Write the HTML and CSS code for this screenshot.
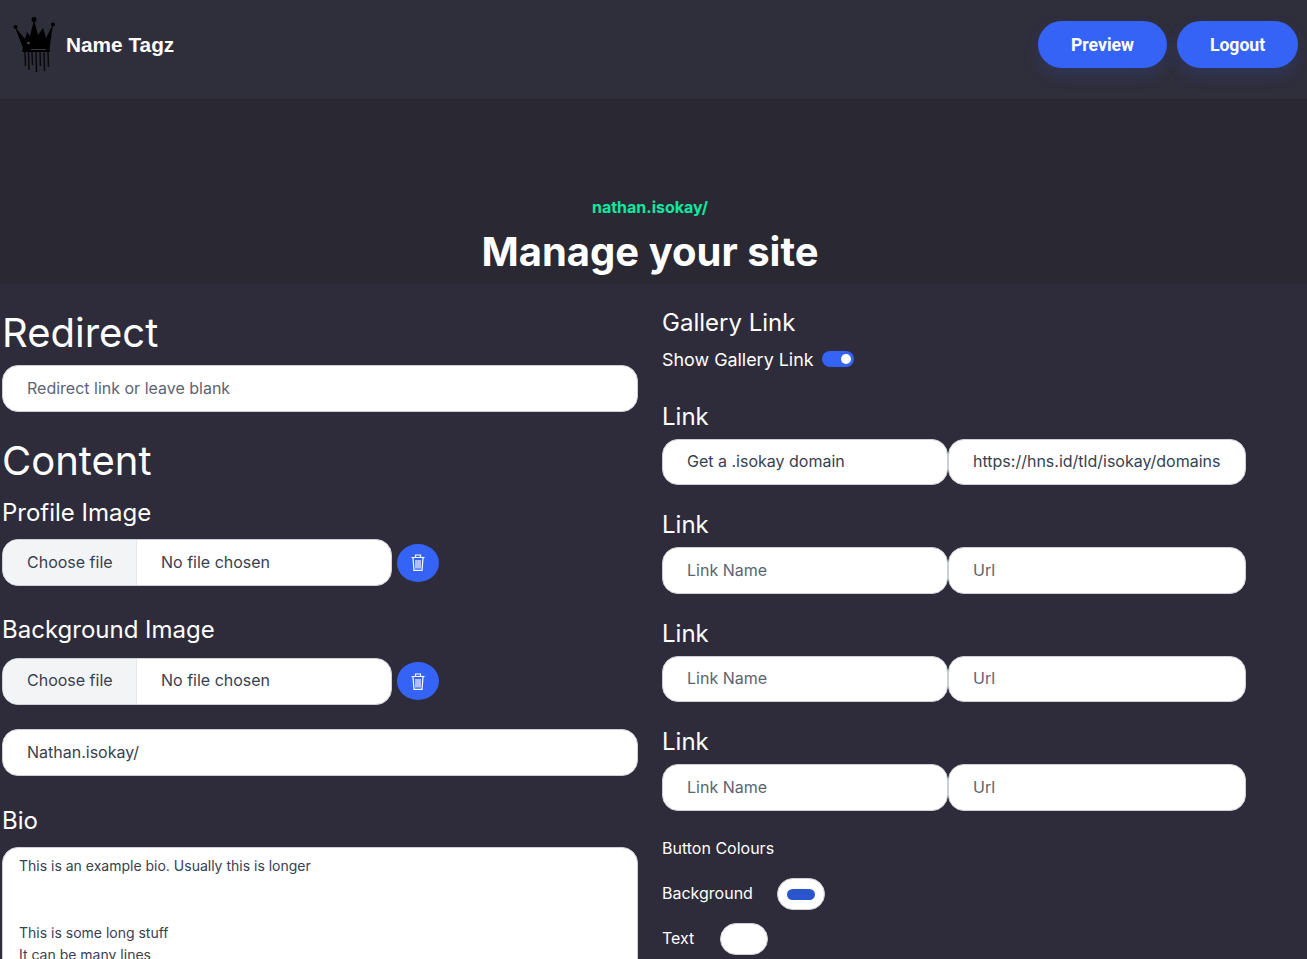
FILE: index.html
```html
<!DOCTYPE html>
<html lang="en">
<head>
    <meta charset="UTF-8">
    <meta name="viewport" content="width=device-width, initial-scale=1.0">
    <title>Name Tagz</title>
    <link rel="stylesheet" href="styles.css">
</head>
<body>
    <!-- Top bar -->
    <header class="navbar">
        <a class="brand">
            <svg class="brand-logo" viewBox="0 0 44 58" width="44" height="58">
                <circle cx="2.500" cy="11" r="2" fill="#000"/>
                <circle cx="21" cy="3.500" r="2.500" fill="#000"/>
                <circle cx="40" cy="8.500" r="2" fill="#000"/>
                <path d="M2 11 L12 23 L14 16 L17 20 L21 4 L25 19 L30 12 L33 22 L40 8 L36.500 33 L37 36 L9 36 L10 32 Z" fill="#000"/>
                <circle cx="15.500" cy="27" r="1.300" fill="#4a4a55"/>
                <path d="M18 33.500 H33" stroke="#3a3a44" stroke-width="1"/>
                <path d="M12 36 L12.500 50 M15.500 36 L16 54 M19 36 L19.500 49 M23 36 L23.500 56 M27 36 L27.500 50 M31 36 L31.500 55 M35 36 L35.500 51" stroke="#000" stroke-width="1.500" opacity="0.8" fill="none"/>
            </svg>
            <span class="brand-name">Name Tagz</span>
        </a>
        <nav class="nav-buttons">
            <button class="nav-btn nav-preview">Preview</button>
            <button class="nav-btn nav-logout">Logout</button>
        </nav>
    </header>

    <!-- Page title -->
    <section class="hero">
        <p class="hero-domain">nathan.isokay/</p>
        <h1 class="hero-title">Manage your site</h1>
    </section>

    <main class="columns">
        <div class="col-left">
            <h2 class="title-lg redirect-title">Redirect</h2>
            <input class="field field-wide" type="text" placeholder="Redirect link or leave blank">

            <h2 class="title-lg content-title">Content</h2>
            <h3 class="title-md profile-title">Profile Image</h3>
            <div class="file-row">
                <div class="file-field">
                    <span class="file-btn">Choose file</span>
                    <span class="file-name">No file chosen</span>
                </div>
                <button class="trash-btn">
                    <svg viewBox="0 0 14 17" width="14" height="17" fill="none" stroke="#fff" stroke-width="1.200"><path d="M0.500 3.500 H13.500 M4.500 3 V1 H9.500 V3 M2 4 L3 16.300 H11 L12 4 M5 6 V14.500 M7 6 V14.500 M9 6 V14.500"/></svg>
                </button>
            </div>

            <h3 class="title-md bg-title">Background Image</h3>
            <div class="file-row file-row-bg">
                <div class="file-field">
                    <span class="file-btn">Choose file</span>
                    <span class="file-name">No file chosen</span>
                </div>
                <button class="trash-btn">
                    <svg viewBox="0 0 14 17" width="14" height="17" fill="none" stroke="#fff" stroke-width="1.200"><path d="M0.500 3.500 H13.500 M4.500 3 V1 H9.500 V3 M2 4 L3 16.300 H11 L12 4 M5 6 V14.500 M7 6 V14.500 M9 6 V14.500"/></svg>
                </button>
            </div>

            <input class="field field-wide name-field" type="text" value="Nathan.isokay/">

            <h3 class="title-md bio-title">Bio</h3>
            <div class="bio-box">
                <p>This is an example bio. Usually this is longer</p>
                <p class="bio-gap">This is some long stuff</p>
                <p>It can be many lines</p>
            </div>
        </div>

        <div class="col-right">
            <h3 class="title-md gallery-title">Gallery Link</h3>
            <div class="toggle-row">
                <span class="toggle-label">Show Gallery Link</span>
                <span class="toggle"><span class="toggle-knob"></span></span>
            </div>

            <div class="link-block first-link">
                <h3 class="title-md">Link</h3>
                <div class="link-inputs">
                    <input class="field link-name" type="text" value="Get a .isokay domain">
                    <input class="field link-url" type="text" value="https://hns.id/tld/isokay/domains">
                </div>
            </div>
            <div class="link-block">
                <h3 class="title-md">Link</h3>
                <div class="link-inputs">
                    <input class="field link-name" type="text" placeholder="Link Name">
                    <input class="field link-url" type="text" placeholder="Url">
                </div>
            </div>
            <div class="link-block">
                <h3 class="title-md">Link</h3>
                <div class="link-inputs">
                    <input class="field link-name" type="text" placeholder="Link Name">
                    <input class="field link-url" type="text" placeholder="Url">
                </div>
            </div>
            <div class="link-block">
                <h3 class="title-md">Link</h3>
                <div class="link-inputs">
                    <input class="field link-name" type="text" placeholder="Link Name">
                    <input class="field link-url" type="text" placeholder="Url">
                </div>
            </div>

            <p class="label-text colours-title">Button Colours</p>
            <div class="colour-row colour-bg">
                <span class="label-text">Background</span>
                <span class="swatch"><span class="swatch-fill"></span></span>
            </div>
            <div class="colour-row colour-text">
                <span class="label-text">Text</span>
                <span class="swatch"><span class="swatch-fill swatch-white"></span></span>
            </div>
        </div>
    </main>
</body>
</html>
```

FILE: styles.css
```css
* {
    box-sizing: border-box;
}

html, body {
    margin: 0;
    height: 959px;
    overflow: hidden;
}

body {
    background-color: #2e2c3a;
    color: #fff;
    font-family: Inter, "Liberation Sans", sans-serif;
}

h1, h2, h3, p {
    margin: 0;
    font-weight: 400;
}

/* Top bar */
.navbar {
    height: 99px;
    padding: 21px 9px 0 13px;
    display: flex;
    justify-content: space-between;
    align-items: flex-start;
    background-color: #2f2e3b;
}

.brand {
    display: flex;
    align-items: center;
    gap: 9px;
    margin-top: -5px;
}

.brand-name {
    font-family: "Liberation Sans", Arial, sans-serif;
    font-weight: 700;
    font-size: 20.8px;
}

.nav-buttons {
    display: flex;
    gap: 10px;
}

.nav-btn {
    height: 47px;
    border: 0;
    border-radius: 24px;
    background-color: #3563f6;
    color: #fff;
    font-family: Roboto, sans-serif;
    font-weight: 700;
    font-size: 17.6px;
    box-shadow: 0 8px 16px rgba(53, 99, 246, 0.15);
}

.nav-preview {
    width: 129px;
}

.nav-logout {
    width: 121px;
}

/* Page title */
.hero {
    height: 185px;
    padding: 98px 7px 0 0;
    background-color: #292833;
    text-align: center;
}

.hero-domain {
    font-weight: 700;
    font-size: 16px;
    line-height: 20px;
    color: #10e8a0;
}

.hero-title {
    margin-top: 11px;
    font-weight: 700;
    font-size: 40px;
    line-height: 48px;
}

/* Form columns */
.columns {
    display: flex;
    padding-left: 2px;
}

.col-left {
    width: 636px;
    flex-shrink: 0;
}

.col-right {
    margin-left: 24px;
    width: 584px;
}

.title-lg {
    font-size: 40px;
    line-height: 48px;
}

.title-md {
    font-size: 24px;
    line-height: 29px;
}

.label-text {
    font-size: 16px;
    line-height: 20px;
}

.redirect-title {
    margin-top: 25px;
}

.content-title {
    margin-top: 25px;
}

.profile-title {
    margin-top: 13px;
}

.bg-title {
    margin-top: 29px;
}

.bio-title {
    margin-top: 30px;
}

.field {
    display: block;
    height: 46.5px;
    padding: 0 24px 2px;
    border: 1px solid #cdd0d6;
    border-radius: 16px;
    background-color: #fff;
    color: #374151;
    font-family: Inter, sans-serif;
    font-size: 16px;
    outline: none;
}

.field::placeholder {
    color: #5b6472;
    opacity: 1;
}

.field-wide {
    width: 636px;
    margin-top: 8px;
    padding-bottom: 0;
}

.name-field {
    margin-top: 24.5px;
}

/* File inputs */
.file-row {
    display: flex;
    align-items: center;
    gap: 5px;
    margin-top: 12px;
}

.file-row-bg {
    margin-top: 14px;
}

.file-field {
    display: flex;
    width: 390px;
    height: 47px;
    border: 1px solid #cdd0d6;
    border-radius: 16px;
    background-color: #fff;
    overflow: hidden;
    font-size: 16px;
    line-height: 44px;
    color: #374151;
}

.file-row-bg .file-field {
    line-height: 42px;
}

.file-btn {
    width: 134px;
    padding-left: 24px;
    background-color: #f3f4f6;
    border-right: 1px solid #e5e7eb;
}

.file-name {
    padding-left: 24px;
}

.trash-btn {
    display: flex;
    align-items: center;
    justify-content: center;
    width: 42px;
    height: 38px;
    margin-top: 1px;
    padding: 0;
    border: 0;
    border-radius: 50%;
    background-color: #3563f6;
}

.file-row-bg .trash-btn {
    margin-top: 0;
}

/* Bio */
.bio-box {
    margin-top: 12px;
    width: 636px;
    height: 200px;
    padding: 7px 16px;
    border: 1px solid #cdd0d6;
    border-radius: 16px;
    background-color: #fff;
    color: #374151;
    font-size: 14px;
    line-height: 22.4px;
}

.bio-gap {
    margin-top: 44.8px;
}

/* Right column */
.gallery-title {
    margin-top: 24px;
}

.toggle-row {
    display: flex;
    align-items: flex-start;
    gap: 8px;
    margin-top: 12px;
}

.toggle-label {
    padding-top: 1px;
    font-size: 17.9px;
    line-height: 20px;
}

.toggle {
    display: flex;
    align-items: center;
    justify-content: flex-end;
    width: 32px;
    height: 16px;
    margin-top: 2px;
    padding-right: 3px;
    border-radius: 8px;
    background-color: #3563f6;
}

.toggle-knob {
    width: 10px;
    height: 10px;
    border-radius: 50%;
    background-color: #fff;
}

.link-block {
    margin-top: 25px;
}

.first-link {
    margin-top: 31.75px;
}

.link-inputs {
    display: flex;
    margin-top: 8px;
}

.link-name {
    width: 286px;
}

.link-url {
    width: 298px;
}

.colours-title {
    margin-top: 27.25px;
}

.colour-row {
    display: flex;
    align-items: center;
}

.colour-row .label-text {
    margin-bottom: 2px;
}

.colour-bg {
    margin-top: 20px;
    gap: 24px;
}

.colour-text {
    margin-top: 13px;
    gap: 26px;
}

.swatch {
    display: flex;
    align-items: center;
    justify-content: center;
    width: 48px;
    height: 32px;
    border: 1px solid #cdd0d6;
    border-radius: 16px;
    background-color: #fff;
}

.swatch-fill {
    width: 28px;
    height: 11px;
    border-radius: 6px;
    background-color: #2a55cc;
}

.swatch-white {
    background-color: #fff;
}
```
